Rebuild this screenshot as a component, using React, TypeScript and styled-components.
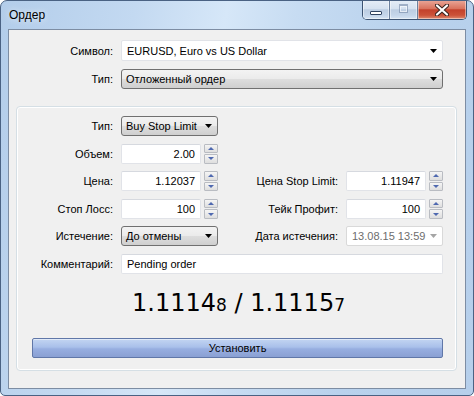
import React from 'react';
import styled, { createGlobalStyle, css } from 'styled-components';

const GlobalStyle = createGlobalStyle`
  html, body { margin: 0; padding: 0; background: #fff; }
  body {
    font-family: "Liberation Sans", Arial, sans-serif;
    font-size: 11px;
    color: #000;
  }
  * { box-sizing: border-box; }
`;

const Window = styled.div`
  width: 474px;
  height: 396px;
  display: flex;
  flex-direction: column;
  padding: 0 7px 6px 7px;
  border: 1px solid #4a6283;
  border-radius: 7px 7px 5px 5px;
  background: linear-gradient(100deg, #b3cdea 0%, #c3d9f1 25%, #d6e7f8 42%, #c7dcf2 55%, #b9d2ed 75%, #b6cfeb 100%);
  overflow: hidden;
`;

const TitleBar = styled.div`
  height: 28px;
  display: flex;
  justify-content: space-between;
  align-items: flex-start;
`;

const Title = styled.div`
  padding: 7px 0 0 1px;
  font-size: 12px;
  line-height: 15px;
  text-shadow: 0 0 6px rgba(255, 255, 255, 0.9);
`;

const CaptionButtons = styled.div`
  display: flex;
  margin: -1px -1px 0 0;
  height: 20px;
  border: 1px solid #3d5473;
  border-top: none;
  border-radius: 0 0 5px 5px;
  overflow: hidden;
`;

const CaptionButton = styled.div<{ $kind: 'min' | 'max' | 'close' }>`
  display: flex;
  align-items: center;
  justify-content: center;
  height: 100%;
  box-shadow: inset 0 0 0 1px rgba(255, 255, 255, 0.45);
  ${(p) =>
    p.$kind === 'close'
      ? css`
          width: 48px;
          background: linear-gradient(#eaa99b 0%, #d9735e 45%, #c3412b 52%, #cc5238 80%, #de8b70 100%);
        `
      : css`
          width: ${p.$kind === 'min' ? 27 : 28}px;
          border-right: 1px solid #6c819e;
          background: linear-gradient(#e6eef7 0%, #d6e2f0 45%, #bccde2 52%, #c5d6ea 80%, #d6e4f3 100%);
        `}
`;

const MinGlyph = styled.div`
  width: 12px;
  height: 4px;
  margin-top: 6px;
  background: #fff;
  border: 1px solid #2f4360;
  border-radius: 1px;
`;

const MaxGlyph = styled.div`
  width: 9px;
  height: 9px;
  margin-top: -2px;
  border: 1px solid rgba(110, 130, 160, 0.55);
  border-top-width: 2px;
  box-shadow: inset 0 0 0 1px rgba(255, 255, 255, 0.6);
`;

const Client = styled.div`
  flex: 1;
  background: #f0f0f0;
  border: 1px solid #7d8da3;
  padding-top: 10px;
`;

const TopGrid = styled.div`
  display: grid;
  grid-template-columns: 104px 322px;
  grid-template-rows: 21px 20px;
  column-gap: 8px;
  row-gap: 8px;
`;

const Label = styled.div`
  display: flex;
  align-items: center;
  justify-content: flex-end;
  white-space: nowrap;
  grid-column: 1;
`;

const RightLabel = styled(Label)`
  grid-column: 3;
`;

const ComboBox = styled.div<{ $variant: 'edit' | 'button' | 'disabled' }>`
  display: flex;
  align-items: center;
  justify-content: space-between;
  padding: 0 5px 0 5px;
  white-space: nowrap;
  ${(p) =>
    p.$variant === 'button'
      ? css`
          padding-left: 4px;
          border: 1px solid #707070;
          border-radius: 3px;
          background: linear-gradient(#f3f3f3 0%, #ebebeb 48%, #dddddd 52%, #cfcfcf 100%);
        `
      : css`
          background: #fff;
          border: 1px solid ${p.$variant === 'edit' ? '#e1e3e8' : '#d9d9d9'};
          border-radius: 2px;
          color: ${p.$variant === 'disabled' ? '#6d6d6d' : '#000'};
        `}
`;

const Arrow = ({ color = '#000' }: { color?: string }) => (
  <svg width="7" height="4" viewBox="0 0 7 4">
    <path d="M0 0H7L3.5 4Z" fill={color} />
  </svg>
);

const GroupBox = styled.div`
  margin: 17px 8px 0 7px;
  border: 1px solid #d5dfe5;
  border-radius: 4px;
  box-shadow: inset 0 0 0 1px #fff;
  padding: 9px 13px 12px 0;
`;

const FormGrid = styled.div`
  display: grid;
  grid-template-columns: 96px 97px 112px 97px;
  grid-auto-rows: 20px;
  column-gap: 8px;
  row-gap: 7.6px;
`;

const NumField = styled.div`
  display: flex;
  gap: 3px;
`;

const NumInput = styled.div<{ $align?: 'left' | 'right' }>`
  flex: 1;
  display: flex;
  align-items: center;
  justify-content: ${(p) => (p.$align === 'left' ? 'flex-start' : 'flex-end')};
  padding: 0 5px 0 5px;
  background: #fff;
  border: 1px solid #e1e3e8;
  border-top-color: #d6d9df;
  border-radius: 2px;
  white-space: nowrap;
`;

const WideInput = styled(NumInput)`
  grid-column: 2 / 5;
`;

const Spinner = styled.div`
  width: 14px;
  display: flex;
  flex-direction: column;
  gap: 1px;
`;

const SpinButton = styled.div`
  flex: 1;
  display: flex;
  align-items: center;
  justify-content: center;
  border: 1px solid #b9bcc2;
  border-radius: 1px;
  background: linear-gradient(#f5f5f5, #dedede);
`;

const SpinArrow = ({ up }: { up?: boolean }) => (
  <svg width="6" height="3" viewBox="0 0 6 3">
    <path d={up ? 'M0 3H6L3 0Z' : 'M0 0H6L3 3Z'} fill="#4f69b0" />
  </svg>
);

const PriceLine = styled.div`
  margin-top: 15px;
  height: 28px;
  text-align: center;
  font-family: "DejaVu Sans", Verdana, sans-serif;
  font-size: 24px;
  line-height: 28px;
  padding-left: 17px;
`;

const PriceTail = styled.span`
  font-size: 17px;
`;

const SubmitButton = styled.div`
  margin: 21px 0 0 15px;
  height: 20px;
  display: flex;
  align-items: center;
  justify-content: center;
  border: 1px solid #6077a8;
  border-radius: 2px;
  background: linear-gradient(#c3d5f2 0%, #a9c0ea 45%, #97aee0 55%, #8aa0d3 100%);
  box-shadow: inset 0 1px 0 rgba(255, 255, 255, 0.5);
`;

const Spin = ({ value }: { value: string }) => (
  <NumField>
    <NumInput>{value}</NumInput>
    <Spinner>
      <SpinButton>
        <SpinArrow up />
      </SpinButton>
      <SpinButton>
        <SpinArrow />
      </SpinButton>
    </Spinner>
  </NumField>
);

const CloseGlyph = () => (
  <svg width="14" height="12" viewBox="0 0 14 12">
    <path d="M2 1.5L12 10.5M12 1.5L2 10.5" stroke="#3a2520" strokeWidth="4.2" strokeLinecap="round" />
    <path d="M2 1.5L12 10.5M12 1.5L2 10.5" stroke="#fff" strokeWidth="2.2" strokeLinecap="round" />
  </svg>
);

export default function App() {
  return (
    <>
      <GlobalStyle />
      <Window>
        <TitleBar>
          <Title>Ордер</Title>
          <CaptionButtons>
            <CaptionButton $kind="min">
              <MinGlyph />
            </CaptionButton>
            <CaptionButton $kind="max">
              <MaxGlyph />
            </CaptionButton>
            <CaptionButton $kind="close">
              <CloseGlyph />
            </CaptionButton>
          </CaptionButtons>
        </TitleBar>
        <Client>
          <TopGrid>
            <Label>Символ:</Label>
            <ComboBox $variant="edit">
              EURUSD, Euro vs US Dollar
              <Arrow />
            </ComboBox>
            <Label>Тип:</Label>
            <ComboBox $variant="button">
              Отложенный ордер
              <Arrow />
            </ComboBox>
          </TopGrid>
          <GroupBox>
            <FormGrid>
              <Label>Тип:</Label>
              <ComboBox $variant="button">
                Buy Stop Limit
                <Arrow />
              </ComboBox>
              <Label>Объем:</Label>
              <Spin value="2.00" />
              <Label>Цена:</Label>
              <Spin value="1.12037" />
              <RightLabel>Цена Stop Limit:</RightLabel>
              <Spin value="1.11947" />
              <Label>Стоп Лосс:</Label>
              <Spin value="100" />
              <RightLabel>Тейк Профит:</RightLabel>
              <Spin value="100" />
              <Label>Истечение:</Label>
              <ComboBox $variant="button">
                До отмены
                <Arrow />
              </ComboBox>
              <RightLabel>Дата истечения:</RightLabel>
              <ComboBox $variant="disabled">
                13.08.15 13:59
                <Arrow color="#a5a5a5" />
              </ComboBox>
              <Label>Комментарий:</Label>
              <WideInput $align="left">Pending order</WideInput>
            </FormGrid>
            <PriceLine>
              1.1114<PriceTail>8</PriceTail> / 1.1115<PriceTail>7</PriceTail>
            </PriceLine>
            <SubmitButton>Установить</SubmitButton>
          </GroupBox>
        </Client>
      </Window>
    </>
  );
}
